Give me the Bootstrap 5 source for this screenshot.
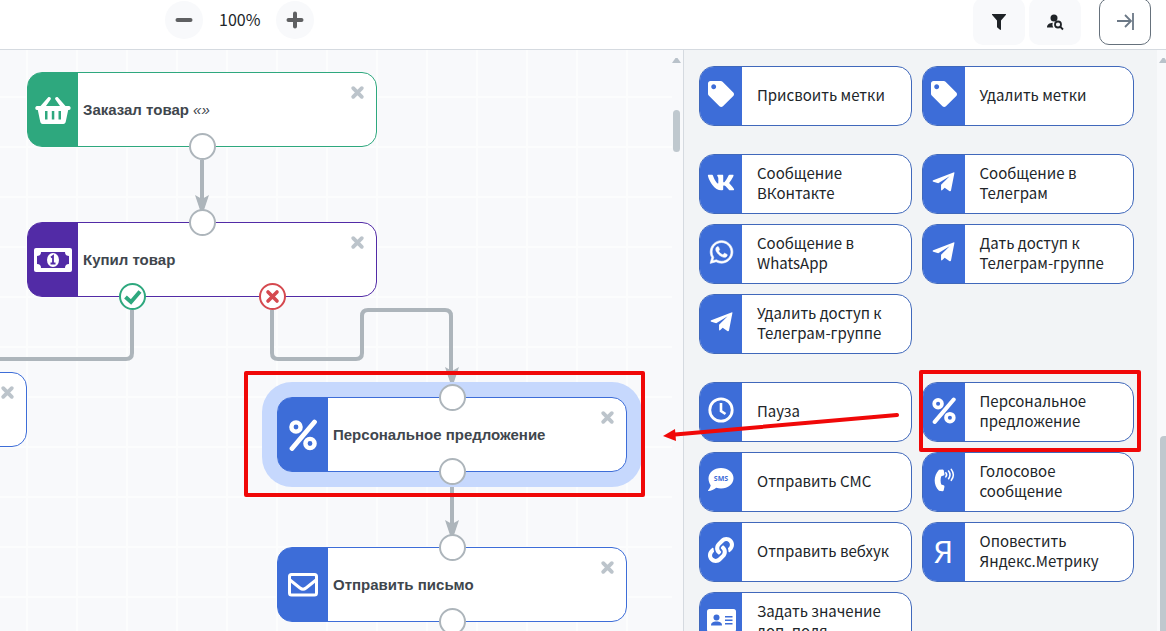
<!DOCTYPE html>
<html lang="ru">
<head>
<meta charset="utf-8">
<meta name="viewport" content="width=device-width, initial-scale=1">
<title>Редактор процесса</title>
<link href="https://cdn.jsdelivr.net/npm/bootstrap@5.3.0/dist/css/bootstrap.min.css" rel="stylesheet">
<style>
:root{--blue:#3d6dd8;--green:#2ea87e;--violet:#522ba6;--wire:#adb5bb;--pale:#f8f9fb;--alert:#f00808}
body{font-family:"Noto Sans CJK SC","Noto Sans",sans-serif;font-size:15px;line-height:20px;color:#212529}
.topbar{height:50px;border-color:#d5dae0!important}
.zoomer{padding:1px 0 0 165px;gap:16px}
.zoomer output{font-size:16px}
.round-btn{width:38px;height:38px;background:var(--pale)}
.tools{padding:0 15px 4px 0}
.tool-btn{width:52px;height:47px;border-radius:10px;background:var(--pale)}
.tool-btn.toggle{background:#fff;border:1px solid #66717c;margin-left:14px}
.canvas{background:var(--pale)}
.canvas-grid{inset:0 11px 0 0;background-image:linear-gradient(90deg,#fcfdfd 2px,transparent 2px),linear-gradient(#fcfdfd 2px,transparent 2px);background-size:50px 50px;background-position:26px 46px}
.wires{left:0;top:0;width:672px;height:600px}
.node{width:350px;height:75px;border:1px solid var(--tone);border-radius:15px;background:#fff}
.node-icon{width:50px;background:var(--tone);border-radius:13px 0 0 13px}
.node-title{font:700 15px/20px "Liberation Sans",Arial,sans-serif;color:#40464d;margin:0;padding-left:5px}
.node-title em{font-weight:400}
.node-close{top:12px;right:11px;width:15px;height:15px;color:#bcc4cb}
.port{width:27px;height:27px;border:2px solid var(--wire);border-radius:50%;background:#fff;left:50%;margin-left:-13px}
.port-in{top:-14px}
.port-out{bottom:-14px}
.port-yes{left:30%;border-color:var(--green)}
.port-no{left:70%;border-color:#d5494f}
.chosen{box-shadow:0 0 0 15px #c6d8fd}
.frame{border:4px solid var(--alert);border-radius:2px;pointer-events:none;z-index:3}
.track{width:11px}
.track-thumb{background:#bfc8ce;border-radius:4px}
.palette{width:483px;background:#f2f4f6;border-color:#d5dae0!important;z-index:2}
.groups{padding:16px 23px 0 15px;gap:28px}
.tiles{display:grid;grid-template-columns:1fr 1fr;gap:10px}
.tile{height:60px;border:1px solid #4068bb;border-radius:15px;background:#fff;font-size:inherit;line-height:20px;color:inherit}
.tile-icon{width:42px;background:var(--blue);border-radius:14px 0 0 14px;padding-bottom:4px}
.tile-text{padding:0 10px 2px 15px}
.ya{font-size:30px;line-height:30px}
.pointer{left:-37px;top:23px;width:240px;height:40px;z-index:4;pointer-events:none}
svg{display:block;overflow:visible}
</style>
</head>
<body class="vh-100 overflow-hidden d-flex flex-column">
<svg width="0" height="0" class="position-absolute" aria-hidden="true">
<symbol id="x" viewBox="0 0 14 14"><path d="M3 3l8 8M11 3l-8 8" stroke="currentColor" stroke-width="3.6" stroke-linecap="round"/></symbol>
<symbol id="percent" viewBox="0 0 28 32"><g fill="none" stroke="currentColor" stroke-width="4.4"><circle cx="7" cy="8" r="4.6"/><circle cx="21" cy="24.500" r="4.600"/><path d="M25.500 3L3 29.500" stroke-linecap="round" stroke-width="4.800"/></g></symbol>
<symbol id="tag" viewBox="0 0 512 512"><path fill="currentColor" d="M0 252.118V48C0 21.49 21.49 0 48 0h204.118a48 48 0 0 1 33.941 14.059l211.882 211.882c18.745 18.745 18.745 49.137 0 67.882L293.823 497.941c-18.745 18.745-49.137 18.745-67.882 0L14.059 286.059A48 48 0 0 1 0 252.118zM112 64c-26.51 0-48 21.49-48 48s21.490 48 48 48 48-21.490 48-48-21.490-48-48-48z"/></symbol>
<symbol id="plane" viewBox="0 0 24 22"><path fill="currentColor" d="M23.600.2L.7 9.200c-.9.400-.8 1.300.1 1.600l5.400 1.600L18.700 4.700 9.300 14v5.300c0 1 .8 1.200 1.400.6l2.600-2.700 5.100 3.600c.9.600 1.700.3 1.900-.8L24 1.200c.1-.7-.1-1.100-.4-1z"/></symbol>
</svg>

<header class="topbar bg-white border-bottom d-flex justify-content-between flex-shrink-0">
  <div class="zoomer d-flex align-items-start">
    <button type="button" class="round-btn btn border-0 rounded-circle p-0 d-flex align-items-center justify-content-center" aria-label="Уменьшить"><svg width="18" height="18"><path d="M2.500 9h13" stroke="#5f6062" stroke-width="4" stroke-linecap="round"/></svg></button>
    <output class="align-self-start py-2">100%</output>
    <button type="button" class="round-btn btn border-0 rounded-circle p-0 d-flex align-items-center justify-content-center" aria-label="Увеличить"><svg width="18" height="18"><path d="M2.500 9h13M9 2.500v13" stroke="#5f6062" stroke-width="4" stroke-linecap="round"/></svg></button>
  </div>
  <div class="tools d-flex align-items-end gap-1">
    <button type="button" class="tool-btn btn border-0 p-0 d-flex align-items-center justify-content-center" aria-label="Фильтр"><svg width="14" height="16"><path fill="#1f2327" d="M.5 0h13c.5 0 .7.600.3 1L9 6.500v8.700c0 .6-.6.900-1 .5L5.300 13.500c-.2-.2-.3-.4-.3-.6V6.500L.2 1C-.2.6 0 0 .5 0z"/></svg></button>
    <button type="button" class="tool-btn btn border-0 p-0 d-flex align-items-center justify-content-center" aria-label="Поиск контакта"><svg width="18" height="16"><g fill="#1f2327"><circle cx="8" cy="4" r="3.500"/><path d="M1 13.500c0-3 2.500-4.500 5.800-4.700-.6 1.700-.4 3.400.6 4.700z"/></g><g fill="none" stroke="#1f2327" stroke-width="1.800"><circle cx="12" cy="10.500" r="3"/><path d="M14 12.500l3 3"/></g></svg></button>
    <button type="button" class="tool-btn toggle btn p-0 d-flex align-items-center justify-content-center" aria-label="Свернуть панель"><svg width="18" height="18"><path d="M1 8h14M9 2l6 6-6 6M17 0v17" fill="none" stroke="#6b7886" stroke-width="1.800"/></svg></button>
  </div>
</header>

<main class="d-flex flex-grow-1" style="min-height:0">
  <section class="canvas flex-grow-1 position-relative overflow-hidden d-flex justify-content-end">
    <div class="canvas-grid position-absolute"></div>
    <svg class="wires position-absolute" fill="none" stroke="#adb5bb" stroke-width="4">
      <path d="M202 110v44M132 260v43q0 6-6 6H-5M272 260v43q0 6 6 6h78q6 0 6-6v-37q0-6 6-6h77q6 0 6 6v60M452 435v42"/>
      <g fill="#adb5bb" stroke="none"><path d="M195 145l7 4 7-4-5 15h-4zM445 317l7 4 7-4-5 15h-4zM445 470l7 4 7-4-5 15h-4z"/></g>
    </svg>

    <article class="node position-absolute d-flex" style="--tone:var(--green);left:27px;top:22px">
      <span class="node-icon d-flex align-items-center justify-content-center"><svg width="36" height="28"><path fill="#fff" fill-rule="evenodd" d="M2 10h3.500L13 1.500c1.200-1.400 3.800.3 2.600 2L11 10h14l-4.600-6.500c-1.200-1.700 1.400-3.400 2.600-2L30.500 10H34c2.200 0 2.200 4 0 4h-.8l-2.400 11.500c-.3 1.500-1 2.500-2.500 2.500H7.700c-1.500 0-2.200-1-2.500-2.500L2.800 14H2c-2.200 0-2.200-4 0-4zM10 15v8.500h2.500V15zm6.800 0v8.500h2.500V15zm6.700 0v8.500H26V15z"/></svg></span>
      <h2 class="node-title align-self-center">Заказал товар <em>«»</em></h2>
      <button type="button" class="node-close btn border-0 p-0 position-absolute" aria-label="Удалить"><svg width="15" height="15"><use href="#x"/></svg></button>
      <span class="port port-out position-absolute"></span>
    </article>

    <article class="node position-absolute d-flex" style="--tone:var(--violet);left:27px;top:172px">
      <span class="node-icon d-flex align-items-center justify-content-center"><svg width="38" height="24"><rect width="38" height="24" rx="2" fill="#fff"/><path fill="#522ba6" d="M7 4h24q0 4 4 4v8q-4 0-4 4H7q0-4-4-4V8q4 0 4-4z"/><ellipse cx="19" cy="12" rx="6" ry="7" fill="#fff"/><path d="M17 9.500l2-1.500v7.500m-2.500 0h5" fill="none" stroke="#522ba6" stroke-width="1.800"/></svg></span>
      <h2 class="node-title align-self-center">Купил товар</h2>
      <button type="button" class="node-close btn border-0 p-0 position-absolute" aria-label="Удалить"><svg width="15" height="15"><use href="#x"/></svg></button>
      <span class="port port-in position-absolute"></span>
      <span class="port port-out port-yes position-absolute"><svg width="23" height="23"><path d="M4.500 12l5.500 5 9-10.500" fill="none" stroke="#2ea87e" stroke-width="4"/></svg></span>
      <span class="port port-out port-no position-absolute"><svg width="23" height="23"><path d="M7 7l9 9M16 7l-9 9" stroke="#d5494f" stroke-width="3.600" stroke-linecap="round"/></svg></span>
    </article>

    <article class="node position-absolute d-flex" style="--tone:var(--blue);left:-323px;top:322px">
      <button type="button" class="node-close btn border-0 p-0 position-absolute" aria-label="Удалить"><svg width="15" height="15"><use href="#x"/></svg></button>
    </article>

    <article class="node chosen position-absolute d-flex" style="--tone:var(--blue);left:277px;top:347px">
      <span class="node-icon d-flex align-items-center justify-content-center text-white"><svg width="28" height="32"><use href="#percent"/></svg></span>
      <h2 class="node-title align-self-center">Персональное предложение</h2>
      <button type="button" class="node-close btn border-0 p-0 position-absolute" aria-label="Удалить"><svg width="15" height="15"><use href="#x"/></svg></button>
      <span class="port port-in position-absolute"></span>
      <span class="port port-out position-absolute"></span>
    </article>

    <article class="node position-absolute d-flex" style="--tone:var(--blue);left:277px;top:497px">
      <span class="node-icon d-flex align-items-center justify-content-center"><svg width="30" height="24" fill="none" stroke="#fff" stroke-width="3"><rect x="1.500" y="1.500" width="27" height="20.500" rx="2"/><path d="M2 7l10 8q3 2.400 6 0l10-8"/></svg></span>
      <h2 class="node-title align-self-center">Отправить письмо</h2>
      <button type="button" class="node-close btn border-0 p-0 position-absolute" aria-label="Удалить"><svg width="15" height="15"><use href="#x"/></svg></button>
      <span class="port port-in position-absolute"></span>
      <span class="port port-out position-absolute"></span>
    </article>

    <div class="frame position-absolute" style="left:244px;top:321px;width:401px;height:126px"></div>

    <div class="track position-relative d-flex flex-column pt-2">
      <svg width="11" height="6"><path d="M0 5l3.500-5h2L9 5z" fill="#b9c2ca"/></svg>
      <div class="track-thumb" style="width:7px;height:42px;margin:46px 0 0 1px"></div>
    </div>
  </section>

  <aside class="palette border-start flex-shrink-0 position-relative d-flex">
    <div class="groups flex-grow-1 d-flex flex-column">
      <div class="tiles">
        <button type="button" class="tile p-0 d-flex text-start"><span class="tile-icon h-100 flex-shrink-0 d-flex align-items-center justify-content-center text-white"><svg width="26" height="26"><use href="#tag"/></svg></span><span class="tile-text align-self-center">Присвоить метки</span></button>
        <button type="button" class="tile p-0 d-flex text-start"><span class="tile-icon h-100 flex-shrink-0 d-flex align-items-center justify-content-center text-white"><svg width="26" height="26"><use href="#tag"/></svg></span><span class="tile-text align-self-center">Удалить метки</span></button>
      </div>
      <div class="tiles">
        <button type="button" class="tile p-0 d-flex text-start"><span class="tile-icon h-100 flex-shrink-0 d-flex align-items-center justify-content-center text-white"><svg width="28" height="25" viewBox="0 0 576 512"><path fill="currentColor" d="M545 117.700c3.700-12.500 0-21.700-17.800-21.700h-58.900c-15 0-21.900 7.900-25.600 16.700 0 0-30 73.100-72.400 120.500-13.700 13.700-20 18.100-27.500 18.100-3.700 0-9.400-4.400-9.400-16.900V117.700c0-15-4.200-21.700-16.600-21.700h-92.600c-9.400 0-15 7-15 13.500 0 14.200 21.200 17.500 23.400 57.500v86.800c0 19-3.400 22.500-10.900 22.500-20 0-68.600-73.400-97.400-157.400-5.800-16.300-11.500-22.900-26.600-22.900H38.800c-16.800 0-20.200 7.900-20.200 16.700 0 15.600 20 93.100 93.100 195.500C160.400 378.100 229 416 291.400 416c37.500 0 42.100-8.400 42.100-22.900 0-66.800-3.400-73.100 15.400-73.100 8.700 0 23.700 4.400 58.700 38.100 40 40 46.600 57.900 69 57.900h58.900c16.800 0 25.300-8.400 20.400-25-11.200-34.900-86.900-106.700-90.300-111.500-8.700-11.200-6.200-16.200 0-26.200.1-.1 72-101.300 79.400-135.600z"/></svg></span><span class="tile-text align-self-center">Сообщение ВКонтакте</span></button>
        <button type="button" class="tile p-0 d-flex text-start"><span class="tile-icon h-100 flex-shrink-0 d-flex align-items-center justify-content-center text-white"><svg width="23" height="20"><use href="#plane"/></svg></span><span class="tile-text align-self-center">Сообщение в Телеграм</span></button>
        <button type="button" class="tile p-0 d-flex text-start"><span class="tile-icon h-100 flex-shrink-0 d-flex align-items-center justify-content-center text-white"><svg width="23" height="26" viewBox="0 0 448 512"><path fill="currentColor" stroke="currentColor" stroke-width="12" d="M380.900 97.100C339 55.100 283.200 32 223.900 32c-122.400 0-222 99.600-222 222 0 39.100 10.200 77.300 29.600 111L0 480l117.700-30.900c32.400 17.700 68.900 27 106.100 27h.1c122.300 0 224.100-99.600 224.100-222 0-59.300-25.200-115-67.100-157zm-157 341.600c-33.200 0-65.700-8.900-94-25.700l-6.700-4-69.800 18.300L72 359.200l-4.400-7c-18.500-29.400-28.200-63.300-28.200-98.200 0-101.700 82.800-184.500 184.600-184.500 49.300 0 95.600 19.200 130.400 54.100 34.800 34.900 56.200 81.200 56.100 130.500 0 101.800-84.900 184.600-186.600 184.600zm101.200-138.200c-5.500-2.800-32.800-16.200-37.900-18-5.100-1.900-8.800-2.800-12.500 2.800-3.700 5.600-14.300 18-17.600 21.800-3.200 3.700-6.500 4.200-12 1.400-32.600-16.300-54-29.100-75.500-66-5.700-9.800 5.700-9.100 16.300-30.300 1.800-3.700.9-6.900-.5-9.700-1.400-2.800-12.500-30.100-17.100-41.200-4.500-10.800-9.100-9.300-12.500-9.500-3.200-.2-6.900-.2-10.600-.2-3.700 0-9.700 1.400-14.800 6.900-5.100 5.600-19.400 19-19.400 46.300 0 27.300 19.900 53.700 22.600 57.400 2.800 3.700 39.100 59.700 94.800 83.800 35.200 15.200 49 16.500 66.600 13.900 10.700-1.600 32.800-13.400 37.400-26.400 4.600-13 4.600-24.100 3.200-26.400-1.300-2.500-5-3.900-10.500-6.600z"/></svg></span><span class="tile-text align-self-center">Сообщение в WhatsApp</span></button>
        <button type="button" class="tile p-0 d-flex text-start"><span class="tile-icon h-100 flex-shrink-0 d-flex align-items-center justify-content-center text-white"><svg width="23" height="20"><use href="#plane"/></svg></span><span class="tile-text align-self-center">Дать доступ к Телеграм-группе</span></button>
        <button type="button" class="tile p-0 d-flex text-start"><span class="tile-icon h-100 flex-shrink-0 d-flex align-items-center justify-content-center text-white"><svg width="23" height="20"><use href="#plane"/></svg></span><span class="tile-text align-self-center">Удалить доступ к Телеграм-группе</span></button>
      </div>
      <div class="tiles">
        <div class="position-relative d-grid">
          <button type="button" class="tile p-0 d-flex text-start"><span class="tile-icon h-100 flex-shrink-0 d-flex align-items-center justify-content-center text-white"><svg width="26" height="26" fill="none" stroke="#fff"><circle cx="13" cy="13" r="11.200" stroke-width="2.800"/><path d="M13 6v8l4.500 3" stroke-width="2.600"/></svg></span><span class="tile-text align-self-center">Пауза</span></button>
          <svg class="pointer position-absolute" fill="#f00808"><path d="M13 29.500L235 10" stroke="#f00808" stroke-width="4" stroke-linecap="round"/><path d="M1 31l12-7 1 12z"/></svg>
        </div>
        <div class="position-relative d-grid">
          <button type="button" class="tile p-0 d-flex text-start"><span class="tile-icon h-100 flex-shrink-0 d-flex align-items-center justify-content-center text-white"><svg width="24" height="27"><use href="#percent"/></svg></span><span class="tile-text align-self-center">Персональное предложение</span></button>
          <div class="frame position-absolute" style="inset:-12px -7px -10px -3px"></div>
        </div>
        <button type="button" class="tile p-0 d-flex text-start"><span class="tile-icon h-100 flex-shrink-0 d-flex align-items-center justify-content-center text-white"><svg width="26" height="24"><path fill="#fff" d="M13 0c7 0 12.500 4.600 12.500 10.300S20 20.600 13 20.600c-1.700 0-3.300-.3-4.800-.8C6 21.500 3 23 .6 23c-.6 0-.7-.6-.3-1 1.200-1.300 2.100-3 2.400-4.700C1.300 15.300.5 13 .5 10.300.5 4.600 6 0 13 0z"/><text x="13" y="13" text-anchor="middle" font-family="Open Sans,sans-serif" font-size="7" font-weight="700" fill="#3d6dd8">SMS</text></svg></span><span class="tile-text align-self-center">Отправить СМС</span></button>
        <button type="button" class="tile p-0 d-flex text-start"><span class="tile-icon h-100 flex-shrink-0 d-flex align-items-center justify-content-center text-white"><svg width="20" height="25" viewBox="0 0 22 26"><path fill="#fff" d="M5.500 1.200L9.300.8c.7 0 1.200.3 1.400 1l.8 4c.1.800-.2 1.400-.9 1.600L8 8.300c-1 3-1 6 0 9l2.600.9c.7.200 1 .8.900 1.600l-.8 4c-.2.700-.7 1-1.400 1l-3.800-.4C-.8 18-.8 8 5.500 1.200z"/><path d="M13 4.500q1.800 2 0 4.500M16 2.500q3.200 4 0 8.500M19 .8q4.500 6 0 12" fill="none" stroke="#fff" stroke-width="1.700" stroke-linecap="round"/></svg></span><span class="tile-text align-self-center">Голосовое сообщение</span></button>
        <button type="button" class="tile p-0 d-flex text-start"><span class="tile-icon h-100 flex-shrink-0 d-flex align-items-center justify-content-center text-white"><svg width="26" height="26" viewBox="0 0 512 512"><path fill="currentColor" d="M326.612 185.391c59.747 59.809 58.927 155.698.36 214.590-.11.120-.240.250-.360.370l-67.200 67.200c-59.270 59.270-155.699 59.262-214.960 0-59.270-59.260-59.270-155.700 0-214.960l37.106-37.106c9.840-9.840 26.786-3.300 27.294 10.606.648 17.722 3.826 35.527 9.690 52.721 1.986 5.822.567 12.262-3.783 16.612l-13.087 13.087c-28.026 28.026-28.905 73.660-1.155 101.960 28.024 28.579 74.086 28.749 102.325.510l67.200-67.190c28.191-28.191 28.073-73.757 0-101.830-3.701-3.694-7.429-6.564-10.341-8.569a16.037 16.037 0 0 1-6.947-12.606c-.396-10.567 3.348-21.456 11.698-29.806l21.054-21.055c5.521-5.521 14.182-6.199 20.584-1.731a152.482 152.482 0 0 1 20.522 17.197zM467.547 44.449c-59.261-59.262-155.690-59.270-214.960 0l-67.200 67.200c-.120.120-.250.250-.360.370-58.566 58.892-59.387 154.781.360 214.590a152.454 152.454 0 0 0 20.521 17.196c6.402 4.468 15.064 3.789 20.584-1.731l21.054-21.055c8.350-8.350 12.094-19.239 11.698-29.806a16.037 16.037 0 0 0-6.947-12.606c-2.912-2.005-6.640-4.875-10.341-8.569-28.073-28.073-28.191-73.639 0-101.830l67.200-67.190c28.239-28.239 74.300-28.069 102.325.510 27.750 28.300 26.872 73.934-1.155 101.960l-13.087 13.087c-4.350 4.350-5.769 10.790-3.783 16.612 5.864 17.194 9.042 34.999 9.690 52.721.509 13.906 17.454 20.446 27.294 10.606l37.106-37.106c59.271-59.259 59.271-155.699.001-214.959z"/></svg></span><span class="tile-text align-self-center">Отправить вебхук</span></button>
        <button type="button" class="tile p-0 d-flex text-start"><span class="tile-icon h-100 flex-shrink-0 d-flex align-items-center justify-content-center text-white"><span class="ya">Я</span></span><span class="tile-text align-self-center">Оповестить Яндекс.Метрику</span></button>
        <button type="button" class="tile p-0 d-flex text-start"><span class="tile-icon h-100 flex-shrink-0 d-flex align-items-center justify-content-center text-white"><svg width="29" height="23"><rect width="29" height="23" rx="2.500" fill="#fff"/><g fill="#3d6dd8"><circle cx="9.500" cy="8.500" r="3"/><path d="M4 16.500c0-3 2-4 5.500-4s5.500 1 5.500 4z"/><path d="M18 7h7.500v1.500H18zM18 10.500h7.500V12H18zM18 14h7.500v1.500H18z"/></g></svg></span><span class="tile-text align-self-center">Задать значение доп. поля</span></button>
      </div>
    </div>
    <div class="flex-shrink-0 position-relative" style="width:9px;background:#f8f9fb">
      <svg width="9" height="14"><path d="M2 13l3.500-5h2L11 13z" fill="#b9c2ca"/></svg>
      <div class="track-thumb position-absolute bottom-0 end-0" style="top:66.400%;width:6px;border-radius:4px 0 0 0"></div>
    </div>
  </aside>
</main>
<script src="https://cdn.jsdelivr.net/npm/bootstrap@5.3.0/dist/js/bootstrap.bundle.min.js"></script>
</body>
</html>
